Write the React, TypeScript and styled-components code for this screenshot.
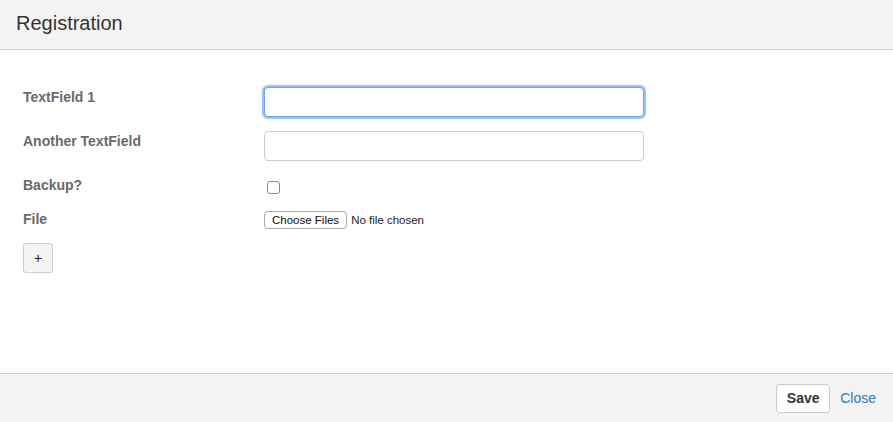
import styled, { createGlobalStyle } from "styled-components"

const GlobalStyle = createGlobalStyle`
    html, body {
        margin: 0;
        padding: 0;
        background: #fff;
    }
    * {
        box-sizing: border-box;
    }
`;

const Page = styled.div`
    display: flex;
    flex-direction: column;
    height: 100vh;
    font-family: "Liberation Sans", Arial, sans-serif;
    color: #333;
`;

const Header = styled.header`
    height: 50px;
    flex: 0 0 auto;
    display: flex;
    align-items: center;
    padding: 0 16px 2px;
    background: #f4f4f4;
    border-bottom: 1px solid #cfcfcf;
`;

const Title = styled.h1`
    margin: 0;
    font-size: 20px;
    font-weight: normal;
    color: #333;
`;

const Body = styled.form`
    flex: 1;
    display: flex;
    flex-direction: column;
    gap: 14px;
    padding: 37px 23px 0;
`;

const Row = styled.div`
    display: flex;
    align-items: flex-start;
`;

const Label = styled.label`
    width: 241px;
    flex: 0 0 241px;
    font-size: 14px;
    line-height: 20px;
    font-weight: bold;
    color: #6a6a6a;
`;

const TextInput = styled.input<{ $focused?: boolean }>`
    width: 380px;
    height: 30px;
    padding: 4px 8px;
    font-family: inherit;
    font-size: 14px;
    border-radius: 4px;
    outline: none;
    border: 1px solid ${p => (p.$focused ? "#6aa4ec" : "#cccccc")};
    box-shadow: ${p => (p.$focused ? "0 0 1px 2px rgba(110, 165, 240, 0.7)" : "none")};
`;

const Checkbox = styled.input`
    appearance: none;
    margin: 6px 0 0 3px;
    width: 13px;
    height: 13px;
    border: 1px solid #8a8a8a;
    border-radius: 3px;
    background: #fff;
`;

const FileField = styled.label`
    display: flex;
    align-items: center;
    gap: 4px;
    margin-top: 2px;
    font-size: 11.5px;
    color: #222;
    input {
        display: none;
    }
`;

const FileButton = styled.span`
    display: inline-flex;
    align-items: center;
    height: 18px;
    padding: 0 7px;
    border: 1px solid #a9a9a9;
    border-radius: 4px;
    background: #fff;
    font-size: 11.5px;
    color: #111;
`;

const AddButton = styled.button`
    width: 30px;
    height: 30px;
    padding: 0;
    border: 1px solid #cccccc;
    border-radius: 3px;
    background: #f4f4f4;
    font-family: inherit;
    font-size: 14px;
    color: #222;
`;

const Footer = styled.footer`
    height: 49px;
    flex: 0 0 auto;
    display: flex;
    align-items: center;
    justify-content: flex-end;
    gap: 10px;
    padding: 0 17px 0 0;
    background: #f4f4f4;
    border-top: 1px solid #cfcfcf;
`;

const SaveButton = styled.button`
    width: 54px;
    height: 29px;
    padding: 0;
    border: 1px solid #cccccc;
    border-radius: 3px;
    background: #fff;
    font-family: inherit;
    font-size: 14px;
    font-weight: bold;
    color: #333;
`;

const CloseLink = styled.a`
    font-size: 14px;
    color: #337ab7;
    text-decoration: none;
    cursor: pointer;
`;

const App = () => {
    return (
        <Page>
            <GlobalStyle />
            <Header>
                <Title>Registration</Title>
            </Header>
            <Body onSubmit={e => e.preventDefault()}>
                <Row>
                    <Label htmlFor="tf1">TextField 1</Label>
                    <TextInput id="tf1" type="text" $focused />
                </Row>
                <Row>
                    <Label htmlFor="tf2">Another TextField</Label>
                    <TextInput id="tf2" type="text" />
                </Row>
                <Row>
                    <Label htmlFor="backup">Backup?</Label>
                    <Checkbox id="backup" type="checkbox" />
                </Row>
                <Row>
                    <Label>File</Label>
                    <FileField>
                        <input type="file" multiple />
                        <FileButton>Choose Files</FileButton>
                        No file chosen
                    </FileField>
                </Row>
                <Row>
                    <AddButton type="button">+</AddButton>
                </Row>
            </Body>
            <Footer>
                <SaveButton type="button">Save</SaveButton>
                <CloseLink>Close</CloseLink>
            </Footer>
        </Page>
    )
}

export default App;
